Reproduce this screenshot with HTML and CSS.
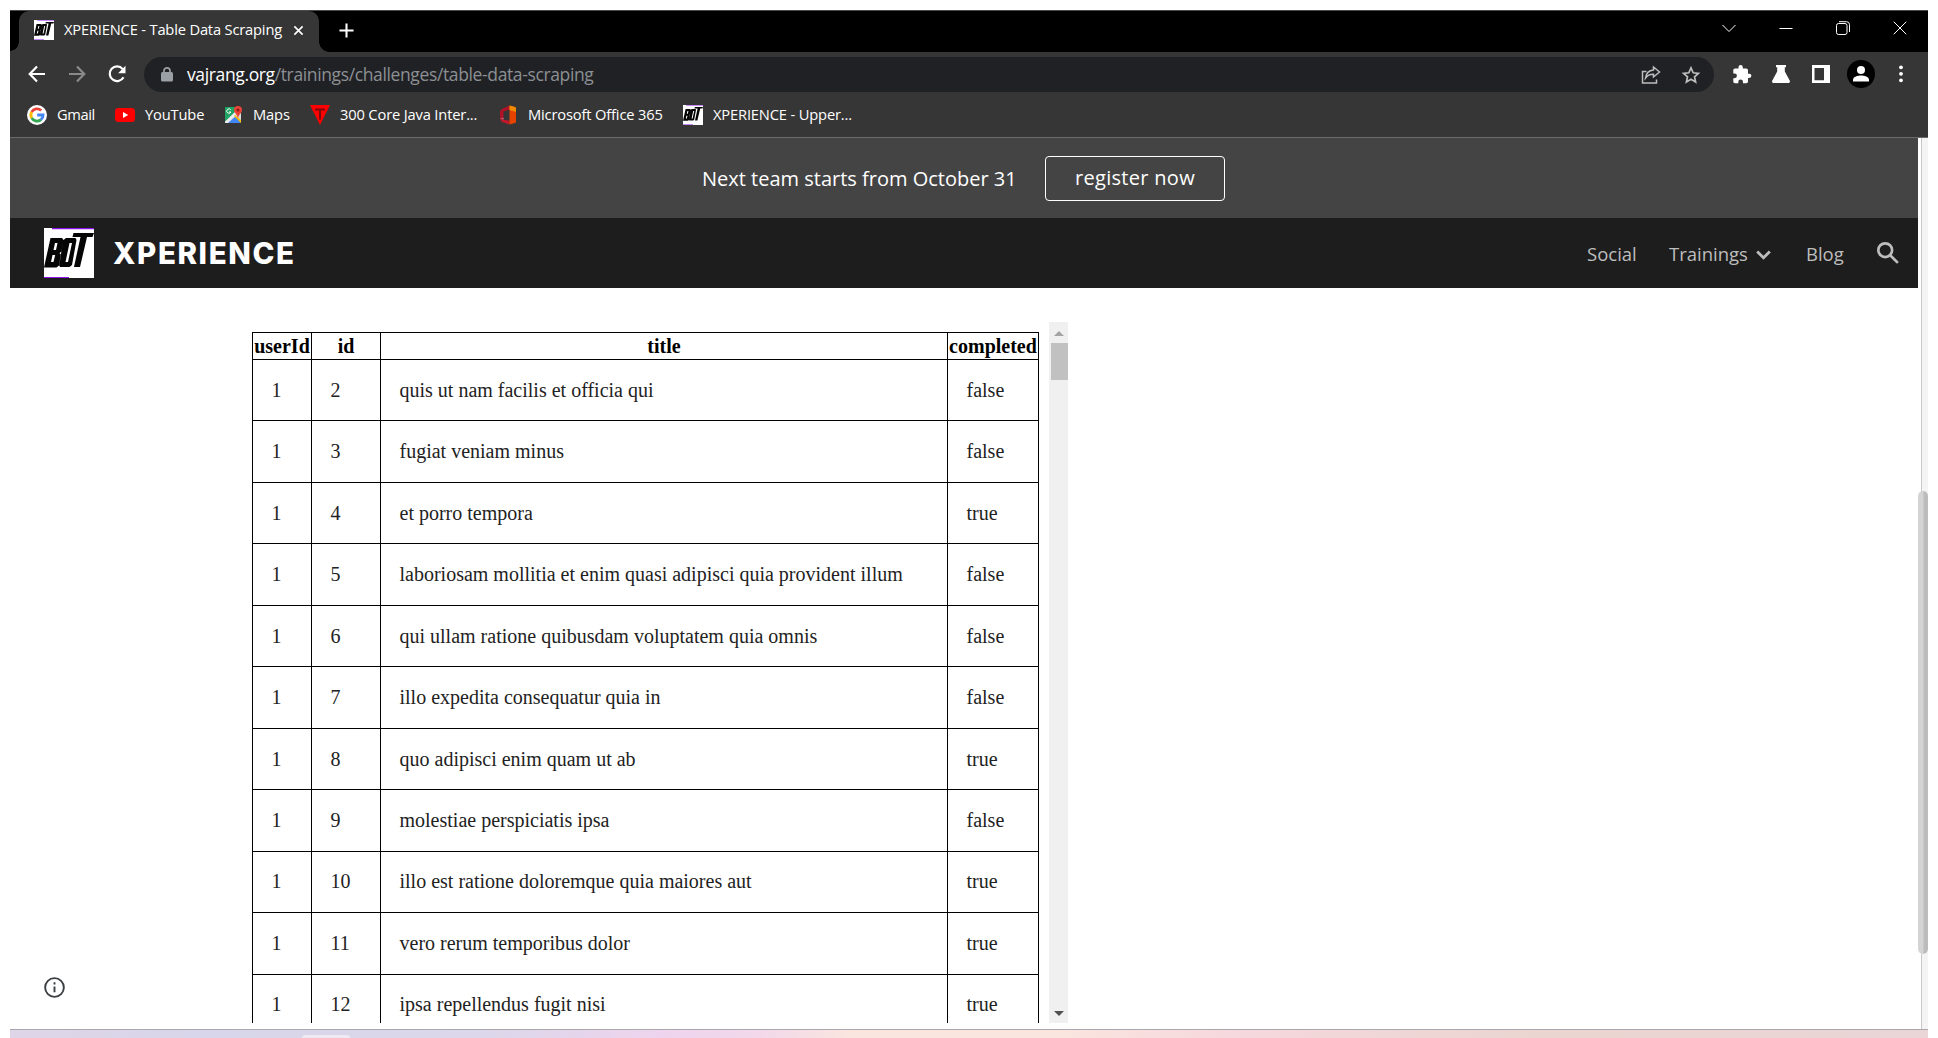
FILE: index.html
```html
<!DOCTYPE html>
<html lang="en">
<head>
<meta charset="utf-8">
<title>XPERIENCE - Table Data Scraping</title>
<link rel="stylesheet" href="styles.css">
</head>
<body>
<svg width="0" height="0" class="defs">
  <symbol id="bot" viewBox="0 0 50 50">
    <path fill="#fff" d="M0 0h50v50H0z"/>
    <path fill="#8d13ee" d="M8 0h42v1.3H8zM0 49h25v1H0z"/>
    <path fill="#050505" fill-rule="evenodd" d="M6.500 10H18l1.500 2-2 11.500-2 1.500 1.500 2-2 10.500-2.500 2H0zM11 15l-1.500 7H12l1.500-7zM8.500 27 7 34h2.500l1.700-7zM22 10h9.500l1 2-4.500 25-2.500 2H16l-1-2 4.500-25zM25.500 15l-4 19H24l4-19zM29.500 5H50l-1.500 4H43l-7 30h-6l6.500-30h-8z"/>
  </symbol>
</svg>
<div class="window">
  <div class="tabstrip">
    <div class="tab">
      <svg class="fav"><use href="#bot"/></svg>
      <span class="tab-title">XPERIENCE - Table Data Scraping</span>
      <svg class="tab-close" viewBox="0 0 12 12"><path d="M1.500 1.500l9 9M10.500 1.500l-9 9"/></svg>
    </div>
    <svg class="newtab" viewBox="0 0 16 16"><path d="M8 .5v15M.5 8h15"/></svg>
    <div class="winctl">
      <svg width="14" height="14" viewBox="0 0 14 14"><path d="M.5 4 7 10.500 13.500 4"/></svg>
      <svg width="14" height="14" viewBox="0 0 14 14"><path d="M.5 7.500h13"/></svg>
      <svg width="14" height="14" viewBox="0 0 14 14"><rect x=".5" y="2.500" width="10.500" height="11" rx="2"/><path d="M3 .7h7.500a3 3 0 0 1 3 3V11"/></svg>
      <svg width="14" height="14" viewBox="0 0 14 14"><path d="M.7.7l12.600 12.600M13.300.7.7 13.300"/></svg>
    </div>
  </div>
  <div class="toolbar">
    <svg class="t-back" width="18" height="18" viewBox="0 0 18 18"><path d="M17 9H2M9 1.500 1.700 9 9 16.500"/></svg>
    <svg class="t-fwd" width="18" height="18" viewBox="0 0 18 18"><path d="M1 9h15M9 1.500 16.300 9 9 16.500"/></svg>
    <svg class="t-reload" width="18" height="18" viewBox="0 0 18 18"><path d="M15.500 12.200A7.300 7.300 0 1 1 14.600 4"/><path class="solid" d="M17.500.8v7.400h-7.400z"/></svg>
    <div class="omnibox">
      <svg class="lock" width="12" height="15" viewBox="0 0 12 15"><rect y="5" width="12" height="9.500" rx="1.500" fill="#9aa0a6"/><path d="M3 6V3.800a3 3 0 0 1 6 0V6" fill="none" stroke="#9aa0a6" stroke-width="1.700"/></svg>
      <span class="url"><b>vajrang.org</b>/trainings/challenges/table-data-scraping</span>
      <svg class="share" width="20" height="20" viewBox="0 0 20 20"><path d="M5.500 6.500h-4v11.500h14v-3.500M12.500 2l6 5-6 5V9.300C9 9.200 6.500 10.300 4.500 13 5 8.700 7.700 5.300 12.500 4.900z"/></svg>
      <svg class="star" width="18" height="18" viewBox="0 0 18 18"><path d="M9 1.900l2.200 4.900 5.200.5-3.900 3.500 1.100 5.200L9 13.300 4.400 16l1.100-5.200-3.900-3.500 5.200-.5z"/></svg>
    </div>
    <svg class="x-puz" width="19" height="19" viewBox="1 1 21 22"><path fill="#fff" d="M20.500 11H19V7c0-1.100-.9-2-2-2h-4V3.500a2.500 2.500 0 0 0-5 0V5H4c-1.100 0-2 .9-2 2v3.800h1.500a2.700 2.700 0 0 1 0 5.400H2V20c0 1.100.9 2 2 2h3.800v-1.500a2.700 2.700 0 0 1 5.400 0V22H17c1.100 0 2-.9 2-2v-4h1.500a2.500 2.500 0 0 0 0-5z"/></svg>
    <svg class="x-flask" width="18" height="18" viewBox="0 0 18 18"><path fill="#fff" d="M4 0h10v2.200h-1.200V6.500L17.700 15.500c.7 1.300 0 2.500-1.400 2.500H1.700C.3 18-.4 16.800.3 15.500L5.200 6.500V2.200H4z"/></svg>
    <svg class="x-panel" width="18" height="18" viewBox="0 0 18 18"><path fill="#fff" fill-rule="evenodd" d="M0 0h18v18H0zM2.500 3v12.300h9.500V3z"/></svg>
    <svg class="x-user" width="28" height="28" viewBox="0 0 28 28"><circle cx="14" cy="14" r="14"/><circle cx="14" cy="10" r="4" fill="#fff"/><path fill="#fff" d="M6 21.500v-1.800C6 17 11 15.600 14 15.600s8 1.400 8 4.100v1.800z"/></svg>
    <svg class="x-menu" width="4" height="18" viewBox="0 0 4 18"><g fill="#fff"><circle cx="2" cy="2.300" r="1.900"/><circle cx="2" cy="8.800" r="1.900"/><circle cx="2" cy="15.300" r="1.900"/></g></svg>
  </div>
  <div class="bookmarks">
    <div class="bm w1"><svg viewBox="0 0 20 20"><circle cx="10" cy="10" r="10" fill="#fff"/><g fill="none" stroke-width="2.800"><path stroke="#ea4335" d="M4.700 7A6.100 6.100 0 0 1 14.200 5.600"/><path stroke="#fbbc05" d="M4.700 13a6.100 6.100 0 0 1 0-6"/><path stroke="#34a853" d="M14 14.600A6.100 6.100 0 0 1 4.700 13"/><path stroke="#4285f4" d="M10.200 10h5.900c0 2-.8 3.500-2.200 4.700"/></g></svg><span>Gmail</span></div>
    <div class="bm w2"><svg viewBox="0 0 20 20"><rect y="3" width="20" height="14" rx="3.500" fill="#f00"/><path fill="#fff" d="M8 7v6l5.200-3z"/></svg><span>YouTube</span></div>
    <div class="bm w3"><svg viewBox="0 0 20 20"><path fill="#1fa463" d="M2 2h16v16H2z"/><path fill="#4285f4" d="M4 18l7-7 7 7z"/><path fill="#e8eaed" d="M2 16.500 15 4l3 3-7.500 6L5 18H2z"/><path fill="#fbbc04" d="M11 11l2-1.500 5 5V18z"/><path fill="#dadce0" d="M12 10l6 5V8z"/><path d="M7.800 4.800A2.200 2.200 0 1 0 8 7H6" fill="none" stroke="#fff" stroke-width="1"/><path fill="#ea4335" d="M15 1a4 4 0 0 1 4 4c0 3-3 3.500-4 8.500-1-5-4-5.500-4-8.500a4 4 0 0 1 4-4z"/><circle cx="15" cy="5" r="1.500" fill="#8c1b16"/></svg><span>Maps</span></div>
    <div class="bm w4"><svg viewBox="0 0 20 20"><path fill="#f00" d="M0 0h20L10 20z"/><path d="M5 4.500h10M10 4.500v10" fill="none" stroke="#7b0909" stroke-width="2"/></svg><span>300 Core Java Inter...</span></div>
    <div class="bm w5"><svg viewBox="0 0 20 20"><path fill="#b01226" d="M11.500.5 4 4Q2 5 2 7v7l3.500-1.500V6.500l6-2z"/><path fill="#f0607f" d="M2 14l3.500-1.500v2.200z"/><path fill="#c4162a" d="M2 14l3.500.7 6 1V19.500L4 17z"/><path fill="#e64200" d="M11.500.5 17 2q1 .4 1 1.500v13q0 1-1 1.500l-5.500 1.500z"/><path fill="#f08a00" d="M11.500.5 17 2q1 .4 1 1.500V7l-6.500-2z"/></svg><span>Microsoft Office 365</span></div>
    <div class="bm w6"><svg><use href="#bot"/></svg><span>XPERIENCE - Upper...</span></div>
  </div>
  <div class="viewport">
    <div class="page">
      <div class="banner"><span class="msg">Next team starts from October 31</span><a class="register">register now</a></div>
      <div class="nav">
        <svg class="logo"><use href="#bot"/></svg>
        <span class="brand">XPERIENCE</span>
        <span class="link social">Social</span>
        <span class="link trainings">Trainings</span>
        <svg class="chev" width="15" height="10" viewBox="0 0 15 10"><path d="M1.200 1.500l6.300 6.300 6.300-6.300"/></svg>
        <span class="link blog">Blog</span>
        <svg class="search" width="22" height="22" viewBox="0 0 22 22"><circle cx="8.200" cy="8.200" r="6.900"/><path d="M13.200 13.200l7.700 7.700"/></svg>
      </div>
      <div class="content">
        <svg class="info" width="21" height="21" viewBox="0 0 22 22"><circle cx="11" cy="11" r="9.800"/><path d="M11 10v6M11 5.500v2.300"/></svg>
        <div class="frame">
          <table>
            <colgroup><col class="c1"><col class="c2"><col class="c3"><col class="c4"></colgroup>
            <tr><th>userId</th><th>id</th><th>title</th><th>completed</th></tr>
            <tr><td>1</td><td>2</td><td>quis ut nam facilis et officia qui</td><td>false</td></tr>
            <tr><td>1</td><td>3</td><td>fugiat veniam minus</td><td>false</td></tr>
            <tr><td>1</td><td>4</td><td>et porro tempora</td><td>true</td></tr>
            <tr><td>1</td><td>5</td><td>laboriosam mollitia et enim quasi adipisci quia provident illum</td><td>false</td></tr>
            <tr><td>1</td><td>6</td><td>qui ullam ratione quibusdam voluptatem quia omnis</td><td>false</td></tr>
            <tr><td>1</td><td>7</td><td>illo expedita consequatur quia in</td><td>false</td></tr>
            <tr><td>1</td><td>8</td><td>quo adipisci enim quam ut ab</td><td>true</td></tr>
            <tr><td>1</td><td>9</td><td>molestiae perspiciatis ipsa</td><td>false</td></tr>
            <tr><td>1</td><td>10</td><td>illo est ratione doloremque quia maiores aut</td><td>true</td></tr>
            <tr><td>1</td><td>11</td><td>vero rerum temporibus dolor</td><td>true</td></tr>
            <tr><td>1</td><td>12</td><td>ipsa repellendus fugit nisi</td><td>true</td></tr>
          </table>
          <div class="bar">
            <svg width="10" height="5" viewBox="0 0 10 5"><path fill="#a3a3a3" d="M5 0l5 5H0z"/></svg>
            <div class="bar-thumb"></div>
            <svg width="10" height="5" viewBox="0 0 10 5"><path fill="#505050" d="M0 0h10L5 5z"/></svg>
          </div>
        </div>
      </div>
    </div>
    <div class="scroll"><div class="track"></div><div class="thumb"></div></div>
  </div>
  <div class="taskbar"><div class="task"></div></div>
</div>
</body>
</html>
```
FILE: styles.css
```css
* { box-sizing: border-box; }
body { margin: 0; width: 1938px; height: 1038px; overflow: hidden; background: #fff; padding: 10px 10px 0; font-family: "Open Sans", "Noto Sans", sans-serif; }
svg { display: block; flex: none; overflow: visible; }
.defs { position: absolute; }
span { white-space: nowrap; flex: none; }
.window { width: 1918px; height: 1028px; display: flex; flex-direction: column; }

.tabstrip { height: 42px; background: #000; border-top: 1px solid #4a4a4a; display: flex; align-items: center; padding-left: 9px; }
.tab { width: 300px; height: 41px; background: #363636; border-radius: 10px 10px 0 0; display: flex; align-items: center; padding: 0 0 3px 15px; position: relative; }
.tab::before, .tab::after { content: ""; position: absolute; bottom: 0; width: 10px; height: 10px; }
.tab::before { left: -9px; width: 9px; background: radial-gradient(circle at 0 0, #000 8.500px, #363636 9px); }
.tab::after { right: -10px; background: radial-gradient(circle at 100% 0, #000 9.500px, #363636 10px); }
.fav { width: 20px; height: 20px; }
.tab-title { width: 229px; margin-left: 10px; padding-bottom: 2px; font-size: 14.700px; letter-spacing: -.18px; color: #fff; }
.tab-close { width: 11px; height: 11px; stroke: #fff; stroke-width: 1.800; }
.newtab { width: 15px; height: 15px; margin: -2px 0 0 20px; stroke: #fff; stroke-width: 2.200; }
.winctl { margin: -8px 21px 0 auto; display: flex; gap: 43px; }
.winctl svg { fill: none; stroke: #fff; stroke-width: 1; }

.toolbar { height: 44px; background: #363636; display: flex; align-items: center; padding: 0 24px 0 18px; }
.t-back, .t-fwd, .t-reload { fill: none; stroke: #fff; stroke-width: 2.200; }
.t-fwd { margin-left: 22px; stroke: #8a8a8a; }
.t-reload { margin-left: 22px; }
.t-reload .solid { fill: #fff; stroke: none; }
.omnibox { flex: none; width: 1570px; height: 35px; margin-left: 18px; margin-top: 1px; border-radius: 18px; background: #202124; display: flex; align-items: center; padding-left: 17px; }
.url { margin-left: 14px; padding-bottom: 1px; font-size: 17.500px; letter-spacing: -.37px; color: #8c9094; }
.url b { font-weight: 400; color: #fff; }
.share { margin-left: auto; fill: none; stroke: #bdbdbd; stroke-width: 1.500; }
.star { margin: 0 14px 0 21px; fill: none; stroke: #bdbdbd; stroke-width: 1.700; }
.x-puz { margin-left: 18px; }
.x-flask { margin-left: 21px; }
.x-panel { margin-left: 22px; }
.x-user { margin-left: 17px; }
.x-menu { margin-left: 24px; }

.bookmarks { height: 42px; background: #363636; border-bottom: 1px solid #6b6b6b; display: flex; align-items: center; padding: 0 0 4px 17px; }
.bm { display: flex; align-items: center; gap: 10px; color: #fff; font-size: 14.700px; letter-spacing: -.16px; }
.bm span { padding-bottom: 2px; }
.bm svg { width: 20px; height: 20px; }
.w1 { width: 88px; letter-spacing: -.4px; } .w2 { width: 108px; } .w3 { width: 87px; } .w4 { width: 188px; } .w5 { width: 185px; }

.viewport { height: 891px; display: flex; }
.page { width: 1908px; }
.banner { height: 80px; background: #444; color: #fff; font-size: 20px; display: flex; align-items: center; padding-left: 692px; }
.msg { width: 343px; }
.register { width: 180px; height: 45px; border: 1px solid #fff; border-radius: 4px; text-align: center; line-height: 42px; letter-spacing: .3px; margin-top: 1px; }
.nav { height: 70px; background: #1d1d1d; color: #bdbdbd; font-size: 18.500px; display: flex; align-items: center; padding-left: 34px; }
.logo { width: 50px; height: 50px; }
.brand { width: 1474px; margin-left: 19px; padding-bottom: 1px; font: 800 29.500px "Inter", sans-serif; letter-spacing: 1.600px; color: #fff; }
.social { width: 82px; }
.trainings { width: 87px; }
.chev { width: 15px; fill: none; stroke: #bdbdbd; stroke-width: 2.800; margin-top: 3px; }
.blog { width: 71px; margin-left: 35px; }
.search { fill: none; stroke: #bdbdbd; stroke-width: 2.700; margin-bottom: 1px; }

.content { height: 741px; display: flex; }
.info { margin: 689px 0 0 34px; fill: none; stroke: #3c4043; stroke-width: 2; }
.frame { margin: 34px 0 0 187px; height: 701px; width: 816px; overflow: hidden; display: flex; justify-content: space-between; }
table { margin-top: 10px; width: 787px; table-layout: fixed; border-collapse: collapse; font: 20px "Liberation Serif", serif; color: #000; align-self: flex-start; flex: none; }
.c1 { width: 59px; } .c2 { width: 69px; } .c3 { width: 567px; } .c4 { width: 91px; }
th, td { border: 1px solid #000; padding: 0; white-space: nowrap; }
th { height: 27px; }
td { height: 61.480px; padding: 0 0 0 18.500px; text-align: left; color: #222; }
.bar { width: 19px; height: 701px; background: #f0f0f0; display: flex; flex-direction: column; align-items: center; padding: 9px 0 7px; }
.bar-thumb { align-self: flex-end; width: 17px; height: 37px; margin: 7px 0 auto; background: #c1c1c1; }

.scroll { width: 10px; position: relative; padding-left: 3px; }
.track { width: 7px; height: 891px; background: #f4f4f4; border-left: 1px solid #c9c9c9; }
.thumb { position: absolute; left: 0; top: 353px; width: 10px; height: 463px; border-radius: 5px; background: linear-gradient(90deg, #d4d4d4 5px, #bcbcbc 6px); }
.taskbar { height: 9px; border-top: 1px solid #aaa6ae; background: linear-gradient(90deg, #dfd5e8 0, #d8d6ea 10%, #dcd7ea 25%, #eed4ee 34%, #f2d8ea 39%, #fbe6df 44%, #fbe6df 54%, #f5d8dd 64%, #ead5d0 80%, #ead5d7 100%); padding: 5px 0 0 292px; }
.task { width: 48px; height: 3px; border-radius: 4px 4px 0 0; background: #eee9f3; }
```
